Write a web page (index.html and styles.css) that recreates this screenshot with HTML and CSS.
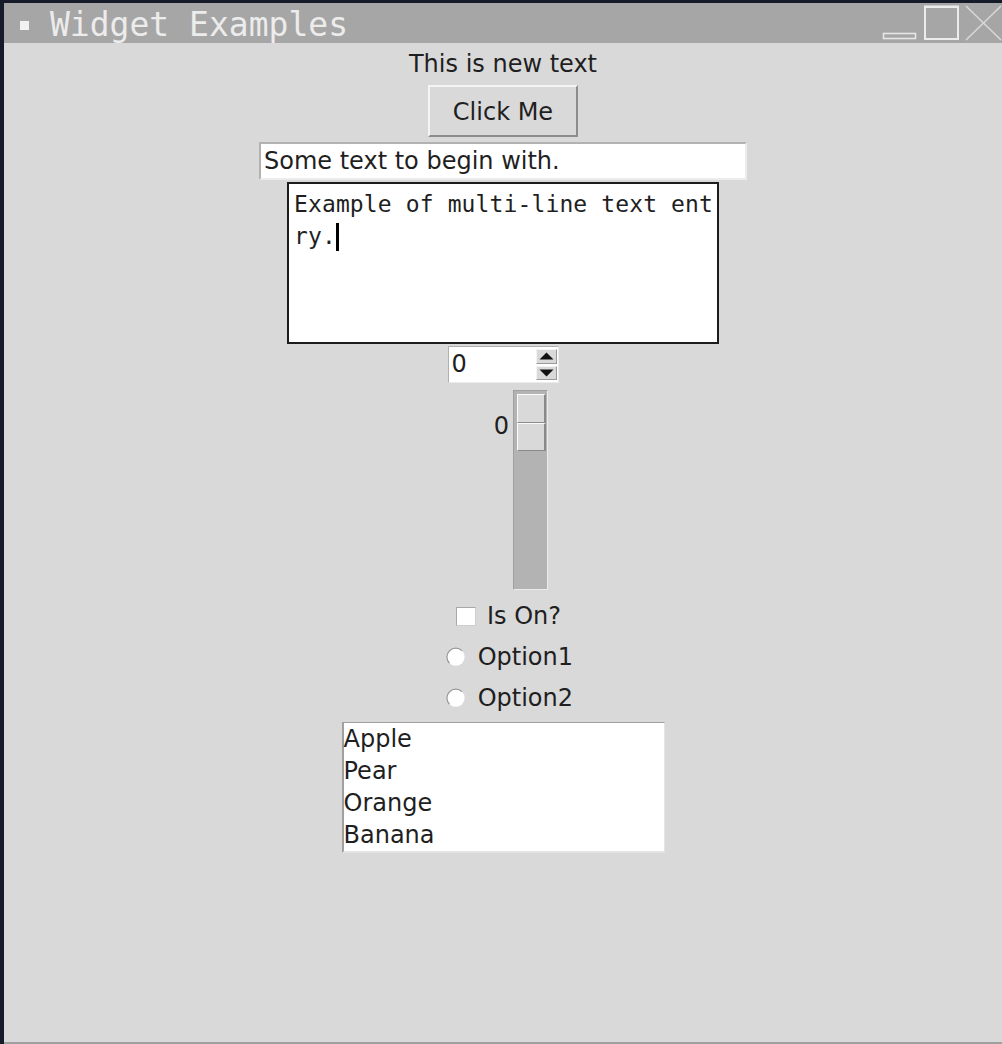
FILE: index.html
```html
<!DOCTYPE html>
<html>
<head>
<meta charset="utf-8">
<title>Widget Examples</title>
<link rel="stylesheet" href="styles.css">
</head>
<body>
<div class="window">
  <div class="titlebar">
    <span class="win-icon"></span>
    <span class="win-title">Widget Examples</span>
    <svg class="win-controls" width="120" height="40" viewBox="0 0 120 40">
      <rect x="1.5" y="30.5" width="32" height="5" fill="none" stroke="#e6e6e6" stroke-width="1.6"/>
      <rect x="43" y="4" width="33" height="32" fill="none" stroke="#ececec" stroke-width="2"/>
      <line x1="42" y1="3.5" x2="77" y2="3.5" stroke="#ececec" stroke-width="2"/>
      <line x1="84" y1="3" x2="119" y2="37" stroke="#d8d8d8" stroke-width="1.6"/>
      <line x1="119" y1="3" x2="84" y2="37" stroke="#d8d8d8" stroke-width="1.6"/>
    </svg>
  </div>
  <div class="content">
    <div class="label">This is new text</div>
    <div class="button">Click Me</div>
    <div class="entry">Some text to begin with.</div>
    <div class="textbox">Example of multi-line text ent<br>ry.<span class="caret"></span></div>
    <div class="spinbox">
      <span class="spin-value">0</span>
      <span class="spin-arrows">
        <span class="spin-btn"><svg width="15" height="8" viewBox="0 0 15 8"><path d="M0.5 7.5 L7.5 0.5 L14.5 7.5 Z" fill="#111"/></svg></span>
        <span class="spin-btn"><svg width="15" height="8" viewBox="0 0 15 8"><path d="M0.5 0.5 L14.5 0.5 L7.5 7.5 Z" fill="#111"/></svg></span>
      </span>
    </div>
    <div class="scale">
      <div class="scale-value">0</div>
      <div class="trough">
        <div class="slider">
          <div class="slider-half"></div>
          <div class="slider-half"></div>
        </div>
      </div>
    </div>
    <div class="choices">
      <div class="check-row">
        <span class="checkbox"></span>
        <span class="choice-text">Is On?</span>
      </div>
      <div class="radio-row">
        <svg class="radio" width="20" height="20" viewBox="0 0 20 20">
          <circle cx="10" cy="10" r="9" fill="#ffffff"/>
          <path d="M3.6 16.4 A9 9 0 0 1 16.4 3.6" fill="none" stroke="#9a9a9a" stroke-width="1.2"/>
        </svg>
        <span class="choice-text">Option1</span>
      </div>
      <div class="radio-row">
        <svg class="radio" width="20" height="20" viewBox="0 0 20 20">
          <circle cx="10" cy="10" r="9" fill="#ffffff"/>
          <path d="M3.6 16.4 A9 9 0 0 1 16.4 3.6" fill="none" stroke="#9a9a9a" stroke-width="1.2"/>
        </svg>
        <span class="choice-text">Option2</span>
      </div>
    </div>
    <div class="listbox">
      <div class="list-item">Apple</div>
      <div class="list-item">Pear</div>
      <div class="list-item">Orange</div>
      <div class="list-item">Banana</div>
    </div>
  </div>
</div>
</body>
</html>
```
FILE: styles.css
```css
html, body {
  margin: 0;
  padding: 0;
}
body {
  background: #151b28;
  height: 1044px;
  box-sizing: border-box;
  padding: 3px 0 0 4px;
  overflow: hidden;
  font-family: "DejaVu Sans", "Liberation Sans", sans-serif;
  color: #1f1f1f;
}
.window {
  height: 1041px;
  display: flex;
  flex-direction: column;
}
.titlebar {
  height: 40px;
  flex: none;
  background: #a6a6a6;
  display: flex;
  align-items: center;
}
.win-icon {
  width: 9px;
  height: 9px;
  background: #f2f2f2;
  margin-left: 16px;
  margin-top: 5px;
}
.win-title {
  margin-left: 21px;
  margin-top: 3px;
  font-family: "DejaVu Sans Mono", "Liberation Mono", monospace;
  font-size: 33px;
  line-height: 40px;
  color: #ececec;
  white-space: pre;
}
.win-controls {
  margin-left: auto;
  display: block;
}
.content {
  flex: 1;
  background: #d9d9d9;
  border-bottom: 2px solid #a0a0a0;
  display: flex;
  flex-direction: column;
  align-items: center;
  font-size: 24px;
}
.label {
  margin-top: 7px;
  height: 28px;
  line-height: 28px;
  white-space: pre;
}
.button {
  margin-top: 7px;
  width: 150px;
  height: 52px;
  box-sizing: border-box;
  border: 2px solid;
  border-color: #f4f4f4 #8c8c8c #8c8c8c #f4f4f4;
  display: flex;
  align-items: center;
  justify-content: center;
  line-height: 28px;
  padding-top: 1px;
}
.entry {
  margin-top: 5px;
  width: 488px;
  height: 38px;
  box-sizing: border-box;
  background: #ffffff;
  border: 2px solid;
  border-color: #b2b2b2 #ececec #ececec #b2b2b2;
  padding: 3px 0 0 3px;
  line-height: 28px;
  white-space: pre;
}
.textbox {
  margin-top: 2px;
  width: 432px;
  height: 162px;
  box-sizing: border-box;
  background: #ffffff;
  border: 2px solid #1c1c1c;
  padding: 4px 5px 0 5px;
  font-family: "DejaVu Sans Mono", "Liberation Mono", monospace;
  font-size: 23px;
  line-height: 32px;
  white-space: pre;
  letter-spacing: 0.12px;
}
.caret {
  display: inline-block;
  width: 3px;
  height: 28px;
  background: #000;
  vertical-align: -7px;
}
.spinbox {
  margin-top: 2px;
  width: 111px;
  height: 37px;
  box-sizing: border-box;
  background: #ffffff;
  border: 1px solid;
  border-color: #b0b0b0 #ececec #ececec #b0b0b0;
  display: flex;
  align-items: stretch;
}
.spin-value {
  flex: 1;
  padding-left: 3px;
  line-height: 34px;
}
.spin-arrows {
  width: 21px;
  margin: 2px 1px 2px 0;
  display: flex;
  flex-direction: column;
  gap: 2px;
}
.spin-btn {
  flex: 1;
  background: #d9d9d9;
  border: 1px solid;
  border-color: #f4f4f4 #9a9a9a #9a9a9a #f4f4f4;
  display: flex;
  align-items: center;
  justify-content: center;
}
.spin-btn svg {
  display: block;
}
.scale {
  margin-top: 7px;
  width: 90px;
  height: 200px;
  display: flex;
}
.scale-value {
  flex: 1;
  text-align: right;
  padding-right: 4px;
  margin-top: 22px;
  height: 28px;
  line-height: 28px;
}
.trough {
  width: 35px;
  height: 200px;
  box-sizing: border-box;
  background: #b3b3b3;
  border: 1px solid;
  border-color: #a0a0a0 #ececec #ececec #a0a0a0;
  padding: 3px 2px 0 3px;
}
.slider {
  width: 29px;
  height: 57px;
  display: flex;
  flex-direction: column;
}
.slider-half {
  flex: 1;
  background: #d9d9d9;
  border-style: solid;
  border-width: 1px 2px 1px 1px;
  border-color: #fafafa #8a8a8a #8a8a8a #fafafa;
}
.choices {
  width: 140px;
  margin-top: 10px;
  display: flex;
  flex-direction: column;
}
.check-row {
  height: 32px;
  display: flex;
  align-items: center;
  padding-left: 23px;
}
.checkbox {
  width: 20px;
  height: 19px;
  box-sizing: border-box;
  background: #ffffff;
  border: 1px solid;
  border-color: #a8a8a8 #cfcfcf #cfcfcf #a8a8a8;
  margin-right: 11px;
  margin-top: 1px;
}
.radio-row {
  height: 32px;
  margin-top: 9px;
  display: flex;
  align-items: center;
  padding-left: 13px;
}
.radio {
  display: block;
  margin-right: 12px;
}
.choice-text {
  line-height: 28px;
  white-space: pre;
}
.listbox {
  margin-top: 8px;
  width: 323px;
  height: 131px;
  box-sizing: border-box;
  background: #ffffff;
  border-style: solid;
  border-width: 1px 1px 2px 2px;
  border-color: #a0a0a0 #e4e4e4 #e4e4e4 #a0a0a0;
}
.list-item {
  height: 32px;
  line-height: 32px;
  white-space: pre;
}
```
